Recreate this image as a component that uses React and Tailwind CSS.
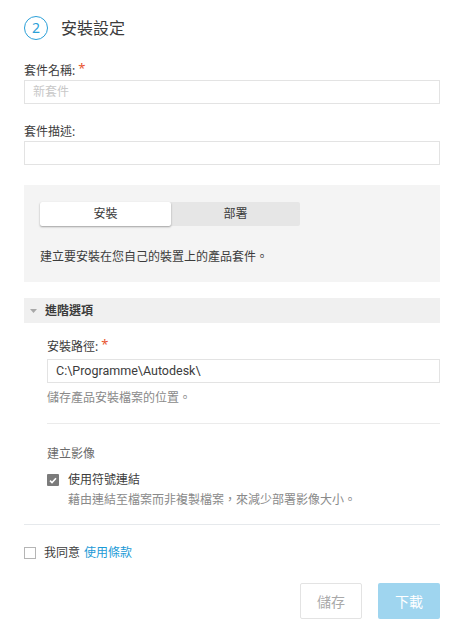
import React from "react";

const font = { fontFamily: '"Noto Sans", "Noto Sans CJK TC", sans-serif' };

export default function App() {
  return (
    <div className="w-[464px] h-[635px] bg-white text-[#3c3c3c] px-6 pt-4 flex flex-col" style={font}>
      {/* header */}
      <div className="flex items-center h-6">
        <div className="w-6 h-6 rounded-full border border-[#2a9fd8] flex items-center justify-center text-[14px] text-[#2a9fd8] leading-none">2</div>
        <div className="ml-[13px] text-[16px] leading-6 text-[#3c3c3c]">安裝設定</div>
      </div>

      {/* name */}
      <div className="mt-[23px] text-[12px] leading-4 flex">
        <span>套件名稱:</span>
        <span className="text-[#e8532f] ml-[3px] -mt-[3px] text-[13px]">*</span>
      </div>
      <div className="mt-px h-6 border border-[#e3e3e3] px-[8px] flex items-center text-[12px] text-[#c8c8c8]">新套件</div>

      {/* description */}
      <div className="mt-5 text-[12px] leading-4">套件描述:</div>
      <div className="mt-px h-6 border border-[#e3e3e3]"></div>

      {/* install/deploy panel */}
      <div className="mt-5 bg-[#f4f4f4] h-[97px] px-4 pt-[17px]">
        <div className="flex w-[260px] h-6 bg-[#e6e6e6] rounded-[2px]">
          <div className="w-[131px] h-6 bg-white rounded-[2px] shadow-[0_1px_2px_rgba(0,0,0,0.35)] flex items-center justify-center text-[12px]">安裝</div>
          <div className="flex-1 flex items-center justify-center text-[12px]">部署</div>
        </div>
        <div className="mt-[23px] text-[12px] leading-4">建立要安裝在您自己的裝置上的產品套件。</div>
      </div>

      {/* advanced */}
      <div className="mt-4 h-[25px] bg-[#f0f0f0] flex items-center pl-[6px]">
        <svg width="7" height="4" viewBox="0 0 7 4" className="mr-[8px]"><path d="M0 0h7L3.5 4z" fill="#a8a8a8" /></svg>
        <span className="text-[12px] font-bold text-[#3c3c3c]">進階選項</span>
      </div>

      <div className="pl-[23px]">
        <div className="mt-[16px] text-[12px] leading-4 flex">
          <span>安裝路徑:</span>
          <span className="text-[#e8532f] ml-[3px] -mt-[3px] text-[13px]">*</span>
        </div>
        <div className="mt-[4px] h-6 border border-[#e3e3e3] pl-[8px] flex items-center text-[12.5px] text-[#3c3c3c]" style={{ fontFamily: 'Roboto, "Noto Sans", sans-serif' }}>C:\Programme\Autodesk\</div>
        <div className="mt-[7px] text-[12px] leading-4 text-[#8a8a8a]">儲存產品安裝檔案的位置。</div>
        <div className="mt-[17px] border-t border-[#ebebeb]"></div>
        <div className="mt-[22px] text-[12px] leading-4 text-[#6a6a6a]">建立影像</div>
        <div className="mt-[10px] flex items-center">
          <div className="w-[12px] h-[12px] bg-[#7b7b7b] rounded-[1px] flex items-center justify-center">
            <svg width="8" height="7" viewBox="0 0 8 7"><path d="M1 3.6l2 2L7 1.2" stroke="#fff" strokeWidth="1.6" fill="none" /></svg>
          </div>
          <span className="ml-[9px] text-[12px] leading-4">使用符號連結</span>
        </div>
        <div className="ml-[21px] mt-[4px] text-[12px] leading-4 text-[#8a8a8a]">藉由連結至檔案而非複製檔案，來減少部署影像大小。</div>
      </div>

      <div className="mt-[16px] border-t border-[#e6e9ec]"></div>

      <div className="mt-[20px] flex items-center">
        <div className="w-[12px] h-[12px] border border-[#b5b5b5]"></div>
        <span className="ml-[8px] text-[12px] leading-4">我同意</span>
        <span className="ml-[4px] text-[12px] leading-4 text-[#1b9ad6]">使用條款</span>
      </div>

      <div className="mt-[22px] flex justify-end gap-4">
        <div className="w-[62px] h-9 border border-[#e3e3e3] rounded-[2px] flex items-center justify-center text-[14px] text-[#a9a9a9]">儲存</div>
        <div className="w-[62px] h-9 bg-[#9fd5ef] rounded-[2px] flex items-center justify-center text-[14px] text-white">下載</div>
      </div>
    </div>
  );
}
